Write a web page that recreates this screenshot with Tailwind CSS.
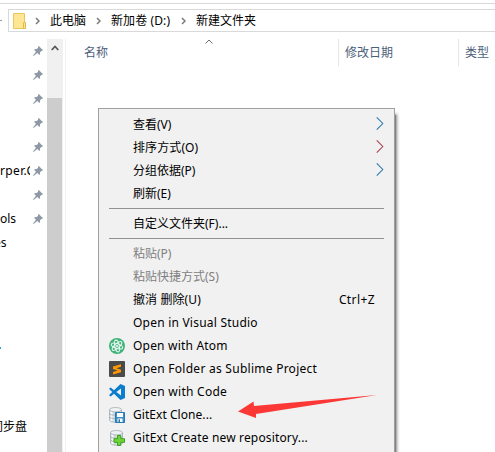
<!DOCTYPE html>
<html lang="zh-CN">
<head>
<meta charset="utf-8">
<title>新建文件夹</title>
<script src="https://cdn.jsdelivr.net/npm/@tailwindcss/browser@4"></script>
</head>
<body class="bg-white">
<svg class="hidden">
  <symbol id="pin" viewBox="0 0 10 10"><path d="M5.8 0 10 4.2 9 5.1 8.3 5 7 6.4Q7.4 8 6.4 9L4.3 7 .4 10 0 9.6 3 5.7 1 3.7Q2.2 2.6 3.7 3L5.2 1.7 4.9.8Z" fill="#8d99a5"/></symbol>
  <symbol id="crumb" viewBox="0 0 5 8"><path d="M1 1 4 4 1 7" fill="none" stroke="#7a7a7a" stroke-width="1.5"/></symbol>
  <symbol id="sub" viewBox="0 0 8 14"><path d="M.5.5 7 7 .5 13.5" fill="none" stroke="currentColor" stroke-width="1.1"/></symbol>
  <symbol id="db" viewBox="0 0 16 16"><path d="M.5 3v10c0 3 12 3 12 0V3Z" fill="#d5dce1" stroke="#a3adb4" stroke-width=".8"/><path d="M2.5 4v10" stroke="#f7f9fa" stroke-width="2"/><ellipse cx="6.5" cy="2.7" rx="6" ry="2.2" fill="#eef2f4" stroke="#a3adb4" stroke-width=".8"/><path d="M.5 6.4c0 2.4 12 2.4 12 0M.5 9.8c0 2.4 12 2.4 12 0" fill="none" stroke="#a3adb4" stroke-width=".9"/></symbol>
</svg>
<div class="relative flex h-[452px] w-[495px] flex-col overflow-hidden bg-white font-['Noto_Sans','Noto_Sans_CJK_SC',sans-serif] text-[12px] leading-[23px] whitespace-nowrap text-black">
  <div class="mt-[3px] h-px shrink-0 bg-[#d9d9d9]"></div>
  <div class="mt-[5px] flex h-[23px] shrink-0 items-center">
    <div class="h-px w-[2px] bg-[#999]"></div>
    <div class="ml-[6px] flex h-[23px] flex-1 items-center border-y border-l border-[#d9d9d9] pl-[4px]">
      <svg class="h-[16px] w-[13px]" viewBox="0 0 13 16"><path d="M.5.5h11v15H.5Z" fill="#ffe694" stroke="#e9c75d"/><path d="M10.5 9.5h2v6h-2Z" fill="#ffe694" stroke="#dfb94a"/></svg>
      <svg class="ml-[9px] h-[8px] w-[5px]"><use href="#crumb"/></svg>
      <span class="ml-[10px] w-[46px]">此电脑</span>
      <svg class="h-[8px] w-[5px]"><use href="#crumb"/></svg>
      <span class="ml-[10px] w-[70px] tracking-[0.1px]">新加卷 (D:)</span>
      <svg class="h-[8px] w-[5px]"><use href="#crumb"/></svg>
      <span class="ml-[10px]">新建文件夹</span>
    </div>
  </div>
  <div class="flex flex-1 pt-[7px]">
    <div class="flex w-[47px] flex-col overflow-hidden leading-[24px]">
      <div class="flex h-[24px] shrink-0 items-center justify-end pr-[4px]"><svg class="size-[10px]"><use href="#pin"/></svg></div>
      <div class="flex h-[24px] shrink-0 items-center justify-end pr-[4px]"><svg class="size-[10px]"><use href="#pin"/></svg></div>
      <div class="flex h-[24px] shrink-0 items-center justify-end pr-[4px]"><svg class="size-[10px]"><use href="#pin"/></svg></div>
      <div class="flex h-[24px] shrink-0 items-center justify-end pr-[4px]"><svg class="size-[10px]"><use href="#pin"/></svg></div>
      <div class="flex h-[24px] shrink-0 items-center justify-end pr-[4px]"><svg class="size-[10px]"><use href="#pin"/></svg></div>
      <div class="flex h-[24px] shrink-0 items-center justify-between pr-[4px]"><span class="w-[30px] overflow-hidden tracking-[0.35px]">rper.C</span><svg class="size-[10px]"><use href="#pin"/></svg></div>
      <div class="flex h-[24px] shrink-0 items-center justify-end pr-[4px]"><svg class="size-[10px]"><use href="#pin"/></svg></div>
      <div class="flex h-[24px] shrink-0 items-center justify-between pr-[4px]"><span>ols</span><svg class="size-[10px]"><use href="#pin"/></svg></div>
      <div class="-ml-[6px] h-[24px] shrink-0">es</div>
      <div class="mt-[92px] h-[2px] w-px shrink-0 bg-[#2f9fe0]"></div>
      <div class="mt-[66px] -ml-[9px] h-[24px] shrink-0">同步盘</div>
    </div>
    <div class="flex w-[15px] flex-col bg-[#f0f0f0]">
      <div class="flex h-[59px] justify-center pt-[6px]"><svg class="h-[6px] w-[8px]" viewBox="0 0 8 6"><path d="M.7 5 4 1.5 7.3 5" fill="none" stroke="#555" stroke-width="1.7"/></svg></div>
      <div class="flex-1 bg-[#cdcdcd]"></div>
    </div>
    <div class="w-[4px] border-r border-[#f0f0f0]"><div class="h-full w-px bg-[#f0f0f0]"></div></div>
    <div class="flex h-[27px] flex-1 leading-[27px] text-[#4c607a]">
      <div class="flex w-[273px] border-r border-[#e5e5e5] pl-[18px]"><span>名称</span><svg class="ml-[97px] h-[5px] w-[8px]" viewBox="0 0 8 5"><path d="M.5 4.5 4 1 7.5 4.5" fill="none" stroke="#6a6a6a"/></svg></div>
      <div class="w-[120px] border-r border-[#e5e5e5] pl-[6px]">修改日期</div>
      <div class="pl-[6px]">类型</div>
    </div>
  </div>

  <!-- Context menu -->
  <div class="absolute top-[115px] left-[103px] h-[350px] w-[293px] bg-[#808080] shadow-[0_0_3px_1px_#888]"></div>
  <div class="absolute top-[108px] left-[98px] h-[360px] w-[297px] border border-[#a0a0a0] bg-[#f1f1f1] pt-[4px] pr-[10px] pl-[10px]">
    <div class="flex h-[23px] items-start justify-between pl-[24px]"><span>查看(V)</span><svg class="mt-[4px] h-[13px] w-[8px] text-[#2676ad]"><use href="#sub"/></svg></div>
    <div class="flex h-[23px] items-start justify-between pl-[24px]"><span class="tracking-[0.1px]">排序方式(O)</span><svg class="mt-[4px] h-[13px] w-[8px] text-[#a83b4b]"><use href="#sub"/></svg></div>
    <div class="flex h-[23px] items-start justify-between pl-[24px]"><span>分组依据(P)</span><svg class="mt-[4px] h-[13px] w-[8px] text-[#2676ad]"><use href="#sub"/></svg></div>
    <div class="h-[23px] pl-[24px]">刷新(E)</div>
    <div class="my-[3px] h-px bg-[#919191]"></div>
    <div class="h-[23px] pl-[24px]">自定义文件夹(F)...</div>
    <div class="my-[3px] h-px bg-[#919191]"></div>
    <div class="h-[23px] pl-[24px] text-[#808080]">粘贴(P)</div>
    <div class="h-[23px] pl-[24px] text-[#808080]">粘贴快捷方式(S)</div>
    <div class="flex h-[23px] justify-between pr-[9px] pl-[24px]"><span class="tracking-[0.1px]">撤消 删除(U)</span><span class="tracking-[0.4px]">Ctrl+Z</span></div>
    <div class="h-[23px] pl-[24px] tracking-[0.22px]">Open in Visual Studio</div>
    <div class="flex h-[23px] items-center gap-[8px] tracking-[0.2px]">
      <svg class="size-[16px]" viewBox="0 0 16 16"><circle cx="8" cy="8" r="8" fill="#40b27b"/><g fill="none" stroke="#e6f7ed" stroke-width="1.1"><ellipse cx="8" cy="8" rx="2.3" ry="6" transform="rotate(-12 8 8)"/><ellipse cx="8" cy="8" rx="2.3" ry="6" transform="rotate(48 8 8)"/><ellipse cx="8" cy="8" rx="2.3" ry="6" transform="rotate(108 8 8)"/></g><circle cx="8" cy="8" r="1" fill="#fff"/></svg>
      <span>Open with Atom</span></div>
    <div class="flex h-[23px] items-center gap-[8px] tracking-[0.26px]">
      <svg class="size-[16px]" viewBox="0 0 16 16"><rect width="16" height="16" rx="1" fill="#4b4b4b"/><path d="M12 3.2v2.6L7.3 7.2 12 8.7v2.6L4 13.5v-2.6l4.6-1.4L4 8V5.4Z" fill="#ff9800"/></svg>
      <span>Open Folder as Sublime Project</span></div>
    <div class="flex h-[23px] items-center gap-[8px] tracking-[0.26px]">
      <svg class="size-[16px]" viewBox="0 0 16 16"><path d="M11.5 0 16 2v12l-4.5 2L5 9.8 1.7 12.4.4 11.7v-1L3.3 8 .4 5.3v-1l1.3-.7L5 6.2ZM12 4.5 7.4 8l4.6 3.5Z" fill="#0b7dcc" fill-rule="evenodd"/></svg>
      <span>Open with Code</span></div>
    <div class="flex h-[23px] items-center gap-[8px] tracking-[0.05px]">
      <svg class="size-[16px]" viewBox="0 0 16 16"><use href="#db" width="16" height="16"/><path d="M6.5 5.5h9v10h-9Z" fill="#3c8fc5" stroke="#2879b2"/><path d="M8 6h6v4H8ZM8.5 11.5h5V15h-5Z" fill="#fff"/><path d="M9.5 12.3h1.5V15H9.5Z" fill="#2879b2"/></svg>
      <span>GitExt Clone...</span></div>
    <div class="flex h-[23px] items-center gap-[8px] tracking-[0.16px]">
      <svg class="size-[16px]" viewBox="0 0 16 16"><use href="#db" x="1" width="16" height="16"/><path d="M8.5 5.5h3.2v3.2H15.5v3.6h-3.8v3.2H8.5v-3.2H5V8.7h3.5Z" fill="#70d437" stroke="#39a321"/></svg>
      <span>GitExt Create new repository...</span></div>
    <div class="my-[3px] h-px bg-[#919191]"></div>
  </div>
  <svg class="absolute top-[390px] left-[236px] h-[32px] w-[144px]" viewBox="0 0 144 32"><path d="M2 21.5 17.5 11.5 18 16 141 5 20 24 20 28Z" fill="#fb3836"/></svg>
</div>
</body>
</html>
